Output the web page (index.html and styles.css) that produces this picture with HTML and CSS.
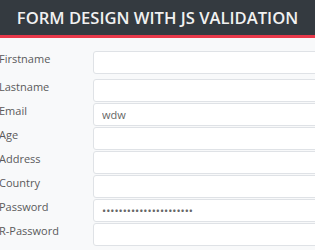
FILE: index.html
```html
<!DOCTYPE html>
<html lang="en">
<head>
    <meta charset="UTF-8">
    <meta name="viewport" content="width=device-width, initial-scale=1.0">
    <title>Form Design</title>
    <link rel="stylesheet" href="styles.css">
</head>
<body>
    <div class="cabecera">
        <h1>FORM DESIGN WITH JS VALIDATION</h1>
    </div>

    <form class="formulario">
        <div class="fila primera">
            <label>Firstname</label>
            <input type="text">
        </div>
        <div class="fila">
            <label>Lastname</label>
            <input type="text">
        </div>
        <div class="fila">
            <label>Email</label>
            <input type="text" value="wdw">
        </div>
        <div class="fila">
            <label>Age</label>
            <input type="text">
        </div>
        <div class="fila">
            <label>Address</label>
            <input type="text">
        </div>
        <div class="fila">
            <label>Country</label>
            <input type="text">
        </div>
        <div class="fila">
            <label>Password</label>
            <input type="password" value="dddddddddddddddddddddd">
        </div>
        <div class="fila">
            <label>R-Password</label>
            <input type="password">
        </div>
    </form>
</body>
</html>
```

FILE: styles.css
```css
body {
    margin: 0;
    background: #f8f9fa;
    font-family: "Open Sans", Arial, sans-serif;
    overflow: hidden;
}

.cabecera {
    background-color: #343a40;
    border-bottom: 3px solid #e8384a;
    height: 35px;
    display: flex;
    align-items: center;
    justify-content: center;
}

.cabecera h1 {
    margin: 0;
    color: #f1f1f1;
    font-size: 16.6px;
    font-weight: 600;
}

.formulario {
    padding-top: 13px;
    margin-left: -1px;
    width: 340px;
}

.fila {
    display: grid;
    grid-template-columns: 94px 1fr;
    height: 23px;
    margin-bottom: 1px;
}

.fila.primera {
    margin-bottom: 5px;
}

.fila label {
    font-size: 11px;
    line-height: 14px;
    color: #5a5a5a;
    padding-top: 1px;
}

.fila input {
    box-sizing: border-box;
    height: 23px;
    border: 1px solid #dfe2e6;
    border-radius: 3px;
    background: #fff;
    padding: 0 8px;
    font-family: inherit;
    font-size: 11px;
    color: #666;
    outline: none;
}
```
